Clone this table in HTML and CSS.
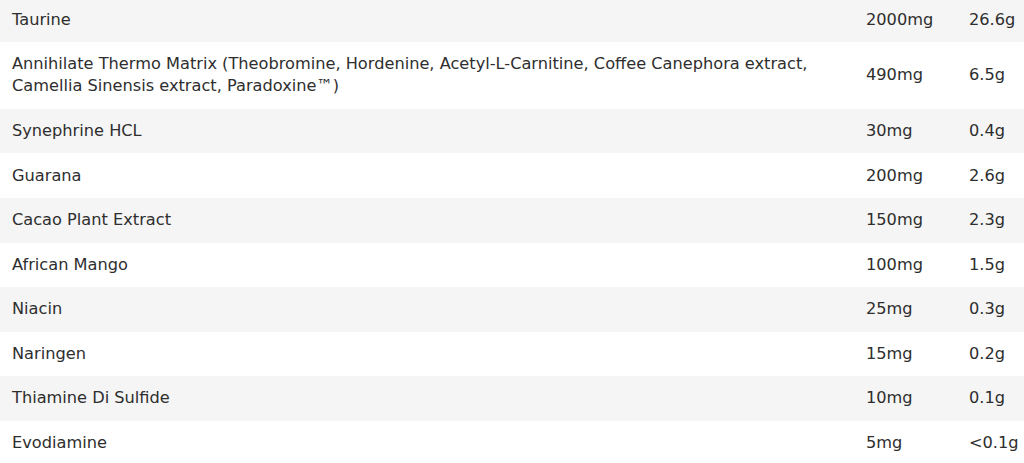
FILE: index.html
```html
<!DOCTYPE html>
<html>
<head>
<meta charset="utf-8">
<link rel="stylesheet" href="styles.css">
</head>
<body>
<table class="facts">
  <colgroup><col class="c-name"><col class="c-amt"><col class="c-pct"></colgroup>
  <tbody>
    <tr><td>Taurine</td><td>2000mg</td><td>26.6g</td></tr>
    <tr><td>Annihilate Thermo Matrix (Theobromine, Hordenine, Acetyl-L-Carnitine, Coffee Canephora extract, Camellia Sinensis extract, Paradoxine™)</td><td>490mg</td><td>6.5g</td></tr>
    <tr><td>Synephrine HCL</td><td>30mg</td><td>0.4g</td></tr>
    <tr><td>Guarana</td><td>200mg</td><td>2.6g</td></tr>
    <tr><td>Cacao Plant Extract</td><td>150mg</td><td>2.3g</td></tr>
    <tr><td>African Mango</td><td>100mg</td><td>1.5g</td></tr>
    <tr><td>Niacin</td><td>25mg</td><td>0.3g</td></tr>
    <tr><td>Naringen</td><td>15mg</td><td>0.2g</td></tr>
    <tr><td>Thiamine Di Sulfide</td><td>10mg</td><td>0.1g</td></tr>
    <tr><td>Evodiamine</td><td>5mg</td><td>&lt;0.1g</td></tr>
  </tbody>
</table>
</body>
</html>
```
FILE: styles.css
```css
html, body {
  margin: 0;
  padding: 0;
  background: #ffffff;
}
.facts {
  width: 1024px;
  border-collapse: collapse;
  table-layout: fixed;
  margin-top: -2.6px;
  font-family: "DejaVu Sans", sans-serif;
  font-size: 16.2px;
  line-height: 22.3px;
  color: #2e2e2e;
}
.c-name { width: 854px; }
.c-amt { width: 103px; }
.c-pct { width: 67px; }
.facts td {
  padding: 11.15px 0 11.15px 12px;
  vertical-align: middle;
  white-space: nowrap;
}
.facts td:first-child {
  white-space: normal;
  padding-right: 20px;
}
.facts tr:nth-child(odd) td {
  background: #f5f5f5;
}
```
